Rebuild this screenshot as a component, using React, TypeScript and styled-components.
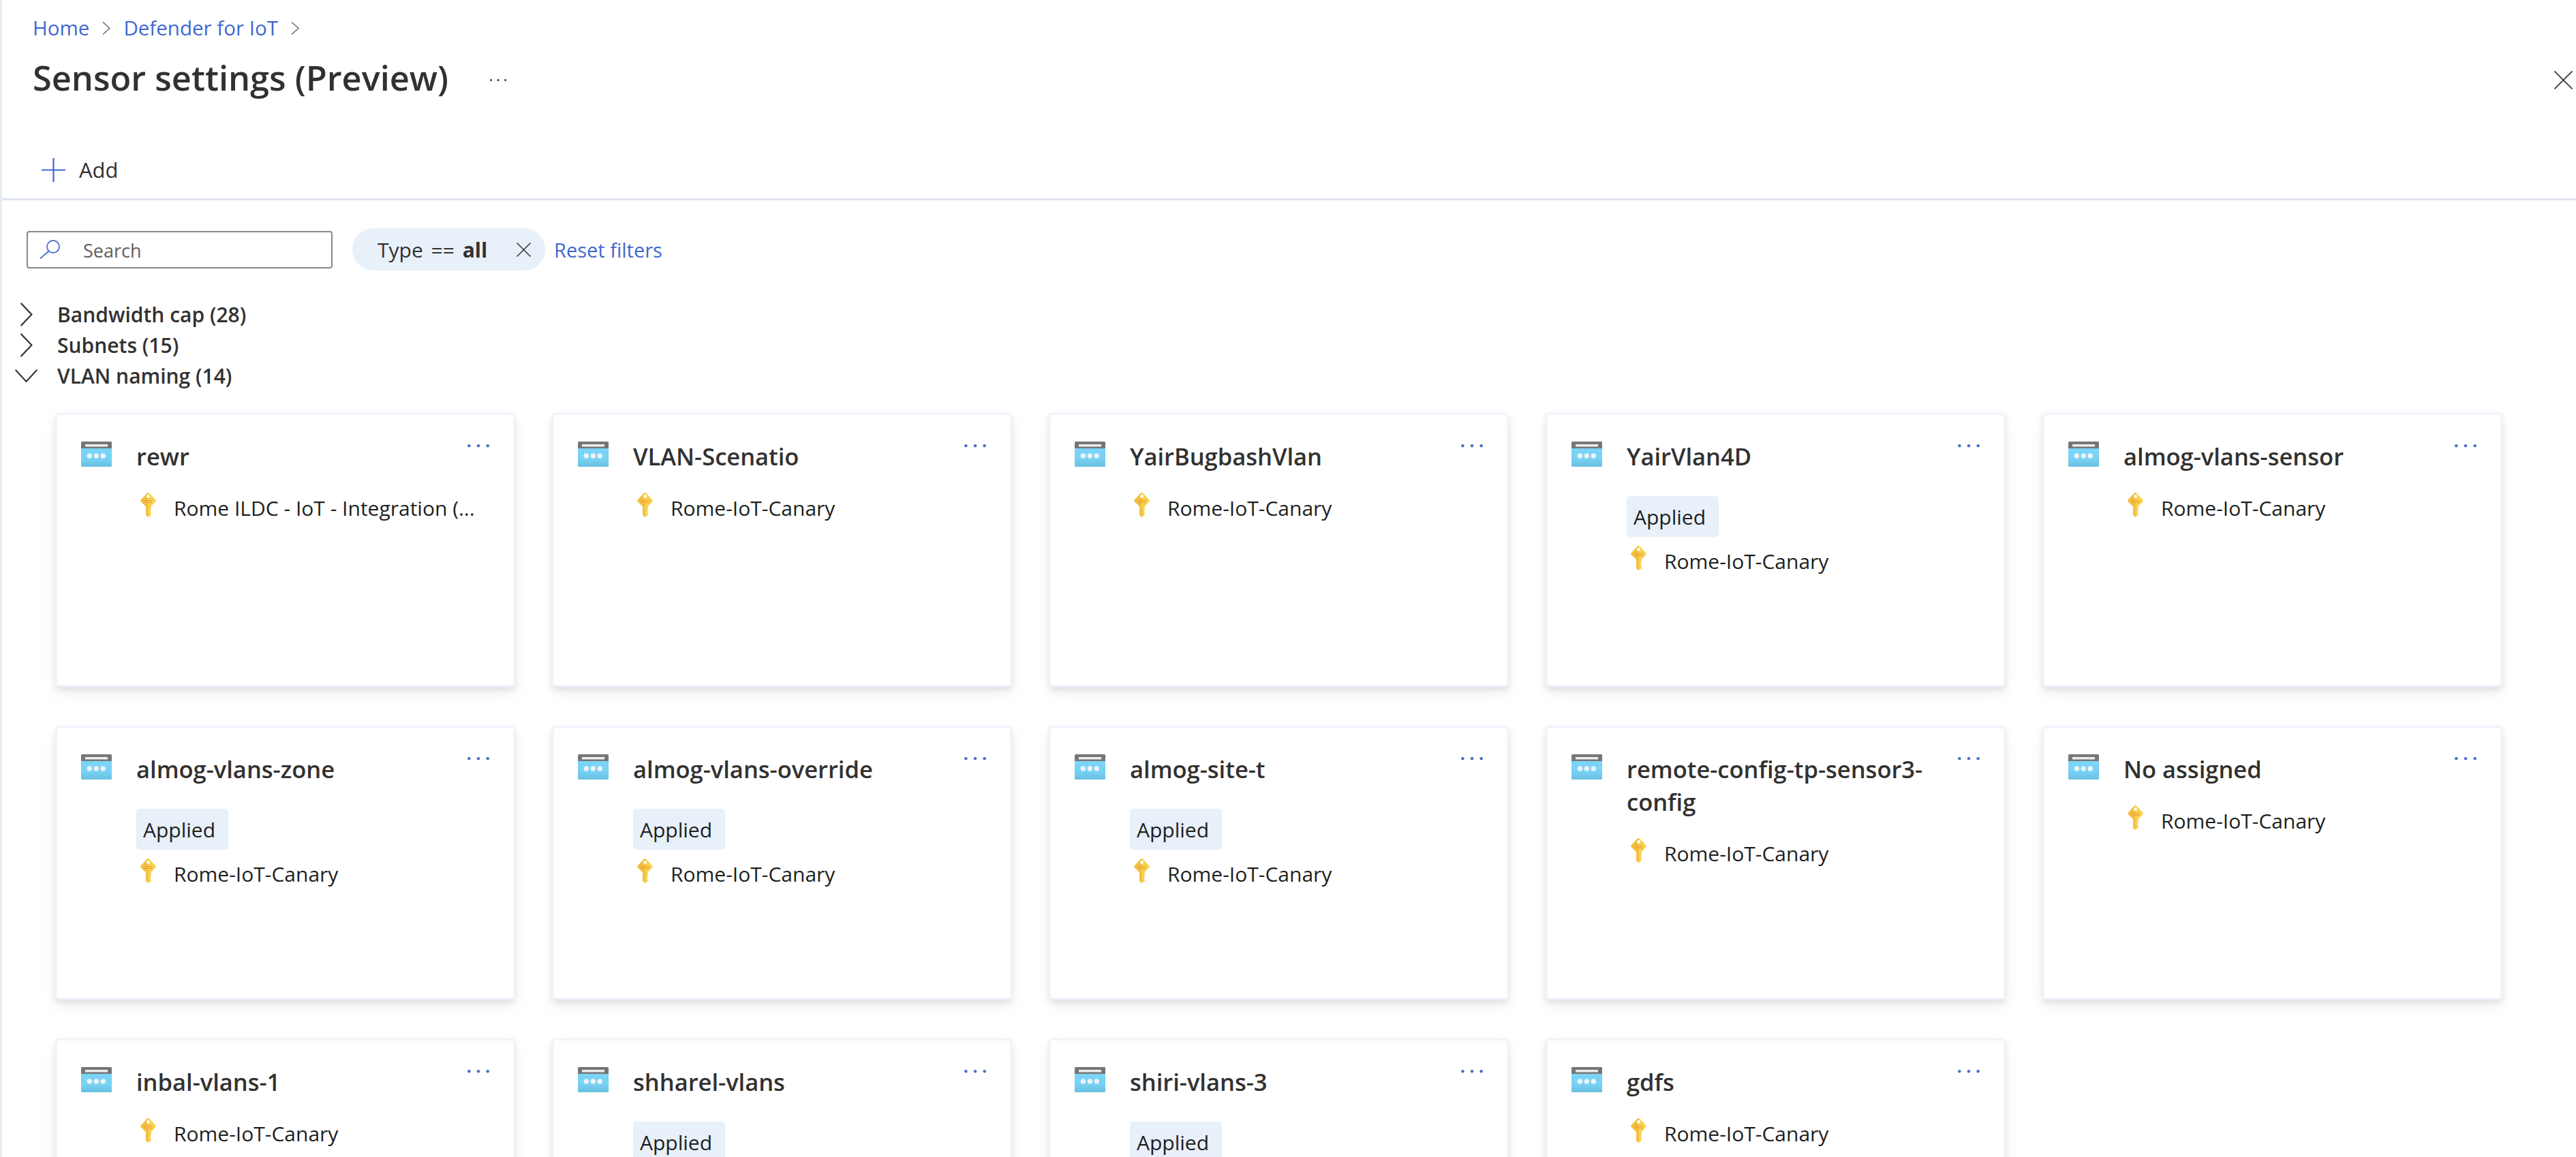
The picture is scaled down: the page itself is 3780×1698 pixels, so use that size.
import React from "react";
import styled, { createGlobalStyle } from "styled-components";

const FONT = `"Open Sans", "Noto Sans", Arial, sans-serif`;
const BLUE = "#4167cf";

const GlobalStyle = createGlobalStyle`
  html, body {
    margin: 0;
    padding: 0;
    height: 100%;
    overflow: hidden;
    background: #fff;
  }
  #root {
    height: 100%;
  }
`;

const Page = styled.div`
  box-sizing: border-box;
  height: 1698px;
  overflow: hidden;
  border-left: 3px solid #e6edf7;
  background: #fff;
  font-family: ${FONT};
  color: #201f1e;
`;

const Header = styled.header`
  border-bottom: 3px solid #dfe3ec;
  height: 294px;
  box-sizing: border-box;
`;

const Breadcrumb = styled.nav`
  display: flex;
  align-items: center;
  gap: 19px;
  height: 40px;
  padding: 21px 0 0 45px;
  font-size: 29.5px;
  line-height: 40px;
  color: ${BLUE};
`;

const TitleRow = styled.div`
  display: flex;
  align-items: center;
  height: 64px;
  margin-top: 24px;
  padding: 0 5px 0 45px;
`;

const Title = styled.h1`
  margin: 0 0 6px;
  font-size: 50.5px;
  font-weight: 600;
  line-height: 58px;
  color: #323130;
`;

const TitleMore = styled.span`
  display: flex;
  margin-left: 61px;
`;

const CloseButton = styled.span`
  display: flex;
  margin-left: auto;
`;

const Toolbar = styled.div`
  display: flex;
  align-items: center;
  gap: 20px;
  height: 35px;
  margin-top: 83px;
  padding-left: 58px;
  font-size: 31px;
  color: #323130;
`;

const ToolbarLabel = styled.span`
  margin-bottom: 2px;
`;

const FilterBar = styled.div`
  display: flex;
  align-items: center;
  height: 62px;
  margin-top: 41px;
  padding-left: 36px;
`;

const SearchBox = styled.div`
  box-sizing: border-box;
  display: flex;
  align-items: center;
  gap: 34px;
  width: 449px;
  height: 55px;
  padding-left: 17px;
  border: 2px solid #8a8886;
  border-radius: 4px;
  font-size: 27px;
  color: #605e5c;
`;

const SearchLabel = styled.span`
  margin-top: 3px;
`;

const FilterPill = styled.div`
  box-sizing: border-box;
  display: flex;
  align-items: center;
  width: 283px;
  height: 62px;
  margin-left: 29px;
  padding-left: 37px;
  border-radius: 31px;
  background: #e8f0fa;
  font-size: 30px;
  word-spacing: 4px;
  color: #323130;
`;

const PillValue = styled.b`
  font-weight: 700;
`;

const PillClose = styled.span`
  display: flex;
  margin-left: auto;
  margin-right: 21px;
`;

const ResetLink = styled.a`
  margin-left: 13px;
  font-size: 29px;
  color: ${BLUE};
`;

const Groups = styled.div`
  margin-top: 42px;
`;

const GroupRow = styled.div`
  display: flex;
  align-items: center;
  height: 45px;
  font-size: 30px;
  font-weight: 600;
  color: #323130;
`;

const GroupToggle = styled.span`
  display: flex;
  align-items: center;
  justify-content: center;
  flex: none;
  width: 70px;
  margin-right: 11px;
`;

const CardGrid = styled.div`
  display: grid;
  grid-template-columns: repeat(5, 675px);
  column-gap: 54px;
  row-gap: 56px;
  margin-top: 32px;
  padding-left: 78px;
`;

const Card = styled.article`
  box-sizing: border-box;
  height: 403px;
  padding: 35px 35px 0;
  border: 3px solid #f1f4fc;
  border-bottom-color: #e9edf7;
  border-radius: 5px;
  background: #fff;
  box-shadow: 0 4px 9px rgba(0, 0, 0, 0.09), 0 10px 24px rgba(0, 0, 0, 0.05);
`;

const CardHead = styled.div`
  display: flex;
  align-items: flex-start;
`;

const ResourceIcon = styled.svg`
  flex: none;
  width: 45px;
  height: 37px;
  margin: 4px 36px 0 0;
`;

const CardTitle = styled.h2`
  flex: 1;
  min-width: 0;
  margin: 0;
  padding-top: 2px;
  font-size: 34.5px;
  font-weight: 600;
  line-height: 48px;
  color: #323130;
`;

const CardMore = styled.span`
  display: flex;
  flex: none;
  margin: 8px 0 0 8px;
`;

const CardBody = styled.div`
  padding-left: 81px;
`;

const Badge = styled.div`
  box-sizing: border-box;
  display: flex;
  align-items: center;
  width: 135px;
  height: 60px;
  margin-top: 34px;
  padding-left: 10px;
  border-radius: 5px;
  background: #e8f0fa;
  font-size: 30px;
  color: #201f1e;
`;

const Subscription = styled.div`
  display: flex;
  align-items: flex-start;
  margin-top: 29px;

  ${Badge} + & {
    margin-top: 13px;
  }
`;

const KeyIcon = styled.svg`
  flex: none;
  width: 23px;
  height: 36px;
  margin: 0 26px 0 6px;
`;

const SubscriptionName = styled.span`
  white-space: nowrap;
  font-size: 30px;
  line-height: 40px;
  margin-top: 3px;
`;

const ChevronRight = ({ width, height, color }: { width: number; height: number; color: string }) => (
  <svg width={width} height={height} viewBox="0 0 12 20" fill="none" stroke={color} strokeWidth={1.3} preserveAspectRatio="none">
    <path d="M1 0.5 L11 10 L1 19.5" />
  </svg>
);

const ChevronDown = () => (
  <svg width={33} height={19} viewBox="0 0 33 19" fill="none" stroke="#323130" strokeWidth={2}>
    <path d="M0.7 0.7 L16.5 18 L32.3 0.7" />
  </svg>
);

const Cross = ({ size, color, weight }: { size: number; color: string; weight: number }) => (
  <svg width={size} height={size} viewBox={`0 0 ${size} ${size}`} fill="none" stroke={color} strokeWidth={weight}>
    <path d={`M0.5 0.5 L${size - 0.5} ${size - 0.5} M${size - 0.5} 0.5 L0.5 ${size - 0.5}`} />
  </svg>
);

const Dots = ({ width, radius, color }: { width: number; radius: number; color: string }) => (
  <svg width={width} height={radius * 2} viewBox={`0 0 ${width} ${radius * 2}`} fill={color}>
    <circle cx={radius} cy={radius} r={radius} />
    <circle cx={width / 2} cy={radius} r={radius} />
    <circle cx={width - radius} cy={radius} r={radius} />
  </svg>
);

const PlusIcon = () => (
  <svg width={35} height={35} viewBox="0 0 35 35" stroke={BLUE} strokeWidth={2.2}>
    <path d="M17.5 0 V35 M0 17.5 H35" />
  </svg>
);

const SearchIcon = () => (
  <svg width={30} height={28} viewBox="0 0 30 28" fill="none" stroke="#4a72c4" strokeWidth={1.8}>
    <circle cx={20} cy={10} r={9} />
    <path d="M13.5 16.5 L1 27.5" />
  </svg>
);

const Resource = () => (
  <ResourceIcon viewBox="0 0 45 37">
    <defs>
      <linearGradient id="resourceFill" x1="0" y1="0" x2="0" y2="1">
        <stop offset="0" stopColor="#7bd5f8" />
        <stop offset="0.55" stopColor="#78d2f5" />
        <stop offset="1" stopColor="#6abfdf" />
      </linearGradient>
    </defs>
    <path d="M1.5 0 H43.5 A1.5 1.5 0 0 1 45 1.5 V10 H0 V1.5 A1.5 1.5 0 0 1 1.5 0 Z" fill="#767676" />
    <path d="M0 10 H45 V35.5 A1.5 1.5 0 0 1 43.5 37 H1.5 A1.5 1.5 0 0 1 0 35.5 Z" fill="url(#resourceFill)" />
    <rect x={6} y={4} width={33} height={3.5} fill="#ececec" />
    <circle cx={12.3} cy={21} r={3.7} fill="#eef3f6" />
    <circle cx={22.3} cy={21} r={3.7} fill="#eef3f6" />
    <circle cx={32.3} cy={21} r={3.7} fill="#eef3f6" />
  </ResourceIcon>
);

const Key = () => (
  <KeyIcon viewBox="0 0 23 36">
    <path
      d="M9.8 0.8 Q11.5 -0.5 13.2 0.8 L22 10.2 Q23.4 11.8 22 13.4 L15.8 20 V24 L14.5 25.2 L15.8 26.4 L14.5 27.6 L15.8 28.8 L14.5 30 L15.8 31.2 V33 L11.5 36 L8 33 V20 L1 13.4 Q-0.4 11.8 1 10.2 Z"
      fill="#f8d24a"
    />
    <path d="M9.8 0.8 L1 10.2 Q-0.4 11.8 1 13.4 L8 20 V33 L11.5 36 V0 Q10.6 0 9.8 0.8 Z" fill="#f2bf42" />
    <circle cx={11.5} cy={5.5} r={2.4} fill="#fff" />
    <rect x={5.5} y={11} width={12} height={1.2} fill="#ee9f3c" />
    <rect x={5.5} y={13.8} width={12} height={1.2} fill="#ee9f3c" />
  </KeyIcon>
);

interface Sensor {
  name: string;
  subscription: string;
  applied?: boolean;
}

const CANARY = "Rome-IoT-Canary";

const SENSORS: Sensor[] = [
  { name: "rewr", subscription: "Rome ILDC - IoT - Integration (..." },
  { name: "VLAN-Scenatio", subscription: CANARY },
  { name: "YairBugbashVlan", subscription: CANARY },
  { name: "YairVlan4D", subscription: CANARY, applied: true },
  { name: "almog-vlans-sensor", subscription: CANARY },
  { name: "almog-vlans-zone", subscription: CANARY, applied: true },
  { name: "almog-vlans-override", subscription: CANARY, applied: true },
  { name: "almog-site-t", subscription: CANARY, applied: true },
  { name: "remote-config-tp-sensor3-config", subscription: CANARY },
  { name: "No assigned", subscription: CANARY },
  { name: "inbal-vlans-1", subscription: CANARY },
  { name: "shharel-vlans", subscription: CANARY, applied: true },
  { name: "shiri-vlans-3", subscription: CANARY, applied: true },
  { name: "gdfs", subscription: CANARY },
];

const SensorCard = ({ sensor }: { sensor: Sensor }) => (
  <Card>
    <CardHead>
      <Resource />
      <CardTitle>{sensor.name}</CardTitle>
      <CardMore>
        <Dots width={32} radius={2.3} color="#4a72c4" />
      </CardMore>
    </CardHead>
    <CardBody>
      {sensor.applied && <Badge>Applied</Badge>}
      <Subscription>
        <Key />
        <SubscriptionName>{sensor.subscription}</SubscriptionName>
      </Subscription>
    </CardBody>
  </Card>
);

const App = () => (
  <Page>
    <GlobalStyle />
    <Header>
      <Breadcrumb>
        <span>Home</span>
        <ChevronRight width={12} height={19} color="#605e5c" />
        <span>Defender for IoT</span>
        <ChevronRight width={12} height={19} color="#605e5c" />
      </Breadcrumb>
      <TitleRow>
        <Title>Sensor settings (Preview)</Title>
        <TitleMore>
          <Dots width={24} radius={1.5} color="#323130" />
        </TitleMore>
        <CloseButton>
          <Cross size={27} color="#3b3a39" weight={1.8} />
        </CloseButton>
      </TitleRow>
      <Toolbar>
        <PlusIcon />
        <ToolbarLabel>Add</ToolbarLabel>
      </Toolbar>
    </Header>
    <FilterBar>
      <SearchBox>
        <SearchIcon />
        <SearchLabel>Search</SearchLabel>
      </SearchBox>
      <FilterPill>
        <span>
          Type == <PillValue>all</PillValue>
        </span>
        <PillClose>
          <Cross size={21} color="#323130" weight={1.5} />
        </PillClose>
      </FilterPill>
      <ResetLink>Reset filters</ResetLink>
    </FilterBar>
    <Groups>
      <GroupRow>
        <GroupToggle>
          <ChevronRight width={19} height={35} color="#323130" />
        </GroupToggle>
        Bandwidth cap (28)
      </GroupRow>
      <GroupRow>
        <GroupToggle>
          <ChevronRight width={19} height={35} color="#323130" />
        </GroupToggle>
        Subnets (15)
      </GroupRow>
      <GroupRow>
        <GroupToggle>
          <ChevronDown />
        </GroupToggle>
        VLAN naming (14)
      </GroupRow>
    </Groups>
    <CardGrid>
      {SENSORS.map((sensor) => (
        <SensorCard key={sensor.name} sensor={sensor} />
      ))}
    </CardGrid>
  </Page>
);

export default App;
